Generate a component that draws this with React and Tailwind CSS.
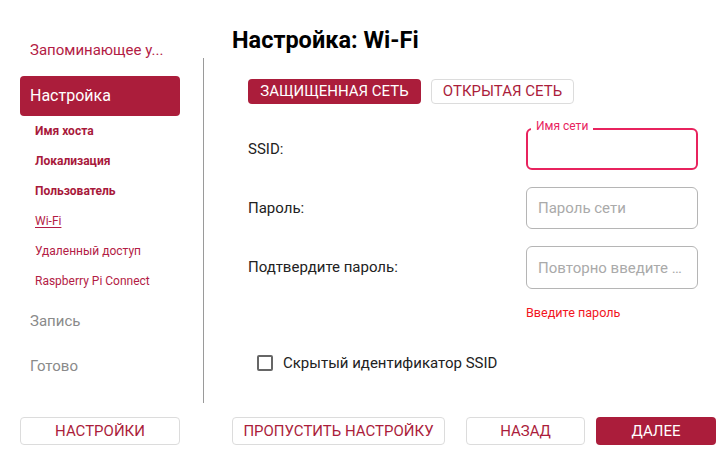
const crimson = 'text-[#ab1d3b]';

const SubItem = ({ label, bold, active }) => (
    <div className={`h-[30px] flex items-center pl-[15px] text-[12px] ${bold ? 'font-bold text-[#a8193b]' : 'text-[#b31c45]'}`}>
        <span className={active ? 'underline underline-offset-2' : ''}>{label}</span>
    </div>
);

const Field = ({ label, children }) => (
    <>
        <div className="flex items-center text-[15px] text-[#222]">{label}</div>
        <div>{children}</div>
    </>
);

export default function App() {
    return (
        <div className="w-[727px] h-[461px] bg-white flex flex-col overflow-hidden" style={{ fontFamily: 'Roboto, "Noto Sans", sans-serif' }}>
            <div className="h-[417px] flex">
                {/* sidebar */}
                <div className="w-[203px] pl-5 pr-[23px] pt-[30px]">
                    <div className="h-10 px-2.5 flex items-center text-[15px] text-[#b31c45]">
                        <span className="truncate">Запоминающее у...</span>
                    </div>
                    <div className="mt-1.5 h-10 px-2.5 flex items-center rounded bg-[#ab1d3b] text-white text-[16px]">
                        Настройка
                    </div>
                    <SubItem label="Имя хоста" bold />
                    <SubItem label="Локализация" bold />
                    <SubItem label="Пользователь" bold />
                    <SubItem label="Wi-Fi" active />
                    <SubItem label="Удаленный доступ" />
                    <SubItem label="Raspberry Pi Connect" />
                    <div className="mt-[5px] h-10 px-2.5 flex items-center text-[15px] text-[#8a8a8a]">Запись</div>
                    <div className="mt-[5px] h-10 px-2.5 flex items-center text-[15px] text-[#8a8a8a]">Готово</div>
                </div>
                <div className="w-px bg-[#9a9a9a] mt-[58px] h-[345px]"></div>

                {/* main */}
                <div className="flex-1 pl-[28px] pt-[26px]">
                    <h1 className="text-[23.5px] leading-[28px] font-bold text-black">Настройка: Wi-Fi</h1>
                    <div className="mt-[25px] ml-4 flex gap-2.5">
                        <button className="h-[25px] w-[173px] rounded bg-[#ab1d3b] text-white text-[15px] leading-none">ЗАЩИЩЕННАЯ СЕТЬ</button>
                        <button className="h-[25px] w-[143px] rounded border border-[#dcdcdc] text-[#ab1d3b] text-[15px] leading-none">ОТКРЫТАЯ СЕТЬ</button>
                    </div>

                    <div className="mt-6 ml-4 grid grid-cols-[278px_172px] gap-y-[17px]">
                        <Field label="SSID:">
                            <div className="relative h-[42px] rounded-md border-2 border-[#e8235e]">
                                <span className="absolute -top-[10px] left-[3px] px-[5px] bg-white text-[12px] leading-[13px] text-[#e8235e]">Имя сети</span>
                            </div>
                        </Field>
                        <Field label="Пароль:">
                            <input
                                type="password"
                                placeholder="Пароль сети"
                                className="h-[42px] w-full rounded-md border border-[#b5b5b5] px-[11px] text-[15px] outline-none placeholder:text-[#aaa]"
                            />
                        </Field>
                        <Field label="Подтвердите пароль:">
                            <input
                                type="password"
                                placeholder="Повторно введите пароль"
                                className="h-[43px] w-full rounded-md border border-[#b5b5b5] px-[11px] text-[15px] outline-none text-ellipsis placeholder:text-[#aaa]"
                            />
                        </Field>
                    </div>
                    <div className="ml-[294px] mt-[16px] text-[12.6px] leading-4 text-[#f2161e]">Введите пароль</div>

                    <label className="mt-[31px] ml-[25px] flex items-center gap-2.5">
                        <span className="w-4 h-4 rounded-[2px] border-2 border-[#666]"></span>
                        <span className="text-[15px] text-[#222]">Скрытый идентификатор SSID</span>
                    </label>
                </div>
            </div>

            {/* bottom buttons */}
            <div className="flex pl-5 text-[15px]">
                <button className={`h-[28px] w-[160px] rounded border border-[#dcdcdc] ${crimson}`}>НАСТРОЙКИ</button>
                <button className={`ml-[52px] h-[28px] w-[213px] rounded border border-[#dcdcdc] ${crimson}`}>ПРОПУСТИТЬ НАСТРОЙКУ</button>
                <button className={`ml-[21px] h-[28px] w-[119px] rounded border border-[#dcdcdc] ${crimson}`}>НАЗАД</button>
                <button className="ml-[11px] h-[28px] w-[120px] rounded bg-[#ab1d3b] text-white">ДАЛЕЕ</button>
            </div>
        </div>
    );
}
